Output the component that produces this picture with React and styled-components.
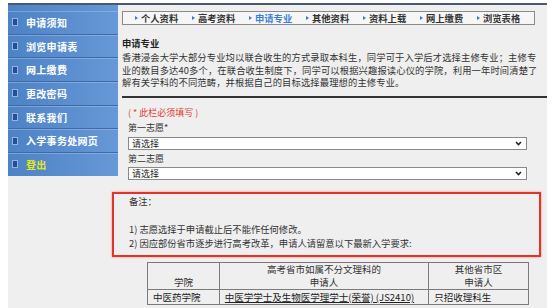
import React from "react";
import styled, { createGlobalStyle } from "styled-components";

const GlobalStyle = createGlobalStyle`
  html, body {
    margin: 0;
    padding: 0;
    background: #fff;
    overflow: hidden;
  }
  body {
    font-family: "Noto Sans CJK SC", "DejaVu Sans", sans-serif;
    color: #222;
  }
`;

const Page = styled.div`
  padding: 3px 12px 0 8px;
`;

const Frame = styled.div`
  display: flex;
  background: #efefef;
  border-top: 2px solid #4a5870;
  min-height: 400px;
`;

const Sidebar = styled.div`
  flex: 0 0 110px;
  align-self: flex-start;
  padding-top: 6px;
  background: linear-gradient(to right, #4d82c5, #6798d7);
`;

const MenuItem = styled.div`
  display: flex;
  align-items: center;
  height: 22.7px;
  padding-left: 4px;
  border-bottom: 1px solid #3f6aa6;
  box-shadow: inset 0 1px 0 rgba(160, 195, 240, 0.5);
  font-weight: 700;
  font-size: 10px;
  letter-spacing: 0.3px;
  color: ${({ $active }) => ($active ? "#e2e81a" : "#fff")};
  &:last-child {
    border-bottom: none;
  }
`;

const MenuIcon = styled.span`
  width: 4px;
  height: 6px;
  margin-right: 8px;
  background: #23508f;
  border: 1px solid #8fb5e6;
`;

const Main = styled.div`
  flex: 0 0 429px;
  padding-left: 4px;
  box-sizing: border-box;
`;

const NavBar = styled.div`
  display: flex;
  align-items: center;
  margin-top: 6px;
  width: 413px;
  height: 14px;
  box-sizing: border-box;
  padding-left: 12px;
  border: 1px solid #8a8a8a;
  background: #f6f6f6;
`;

const NavItem = styled.div`
  flex: 0 0 57px;
  display: flex;
  align-items: center;
  gap: 3px;
  font-size: 9.3px;
  font-weight: 700;
  white-space: nowrap;
  color: ${({ $active }) => ($active ? "#3b80d8" : "#333")};
`;

const NavBullet = styled.span`
  width: 0;
  height: 0;
  border-top: 2px solid transparent;
  border-bottom: 2px solid transparent;
  border-left: 3px solid #3b7ad0;
`;

const Heading = styled.div`
  margin-top: 12px;
  font-size: 9.3px;
  font-weight: 700;
  line-height: 12px;
  color: #222;
`;

const Intro = styled.p`
  margin: 2px 0 0;
  font-size: 9.3px;
  line-height: 12.5px;
  letter-spacing: 0.12px;
  color: #333;
  white-space: nowrap;
`;

const Rule = styled.div`
  margin-top: 7.5px;
  height: 2px;
  width: 425px;
  background: #333;
`;

const Form = styled.div`
  padding-left: 6px;
  margin-top: 7px;
`;

const Hint = styled.div`
  font-size: 9px;
  line-height: 15px;
  color: #e53935;
`;

const Label = styled.div`
  font-size: 9px;
  line-height: 15px;
  color: #333;
`;

const SelectBox = styled.div`
  display: flex;
  align-items: center;
  justify-content: space-between;
  width: 399px;
  height: 13px;
  margin: 1.5px 0 1px;
  box-sizing: border-box;
  padding: 0 4px 0 3px;
  border: 1px solid #8a8a8a;
  background: #fff;
  font-size: 9px;
  color: #222;
`;

const Notes = styled.div`
  margin: 12px 0 0 -10px;
  width: 429px;
  box-sizing: border-box;
  padding: 0 0 5px 15px;
  border: 2px solid #e2342a;
  box-shadow: 0 0 2px rgba(230, 60, 50, 0.6);
  font-size: 9.3px;
  line-height: 14px;
  color: #333;
`;

const Table = styled.table`
  margin: 5px 0 0 25px;
  width: 382px;
  border-collapse: collapse;
  font-size: 9.5px;
  color: #333;

  th, td {
    border: 1px solid #7a7a7a;
    padding: 0 5px;
  }
  th {
    font-weight: 400;
    line-height: 13px;
    height: 26px;
    text-align: center;
    vertical-align: bottom;
  }
  td {
    line-height: 14px;
    color: #222;
  }
`;

const CourseLink = styled.span`
  text-decoration: underline;
`;

const Chevron = () => (
  <svg width="7" height="5" viewBox="0 0 7 5">
    <path d="M1 1 L3.5 3.5 L6 1" fill="none" stroke="#222" strokeWidth="1.6" />
  </svg>
);

const menu = ["申请须知", "浏览申请表", "网上缴费", "更改密码", "联系我们", "入学事务处网页"];
const tabs = ["个人资料", "高考资料", "申请专业", "其他资料", "资料上载", "网上缴费", "浏览表格"];

export default function App() {
  return (
    <>
      <GlobalStyle />
      <Page>
        <Frame>
          <Sidebar>
            {menu.map((m) => (
              <MenuItem key={m}>
                <MenuIcon />
                {m}
              </MenuItem>
            ))}
            <MenuItem $active>
              <MenuIcon />
              登出
            </MenuItem>
          </Sidebar>
          <Main>
            <NavBar>
              {tabs.map((t) => (
                <NavItem key={t} $active={t === "申请专业"}>
                  <NavBullet />
                  {t}
                </NavItem>
              ))}
            </NavBar>
            <Heading>申请专业</Heading>
            <Intro>
              香港浸会大学大部分专业均以联合收生的方式录取本科生，同学可于入学后才选择主修专业；主修专
              <br />
              业的数目多达40多个，在联合收生制度下，同学可以根据兴趣报读心仪的学院，利用一年时间清楚了
              <br />
              解有关学科的不同范畴，并根据自己的目标选择最理想的主修专业。
            </Intro>
            <Rule />
            <Form>
              <Hint>( * 此栏必须填写 )</Hint>
              <Label>第一志愿*</Label>
              <SelectBox>
                请选择
                <Chevron />
              </SelectBox>
              <Label>第二志愿</Label>
              <SelectBox>
                请选择
                <Chevron />
              </SelectBox>
            </Form>
            <Notes>
              备注：
              <br />
              <br />
              1) 志愿选择于申请截止后不能作任何修改。
              <br />
              2) 因应部份省市逐步进行高考改革，申请人请留意以下最新入学要求:
            </Notes>
            <Table>
              <colgroup>
                <col style={{ width: "72px" }} />
                <col style={{ width: "210px" }} />
                <col style={{ width: "100px" }} />
              </colgroup>
              <thead>
                <tr>
                  <th>学院</th>
                  <th>
                    高考省市如属不分文理科的
                    <br />
                    申请人
                  </th>
                  <th>
                    其他省市区
                    <br />
                    申请人
                  </th>
                </tr>
              </thead>
              <tbody>
                <tr>
                  <td>中医药学院</td>
                  <td>
                    <CourseLink>中医学学士及生物医学理学士(荣誉) (JS2410)</CourseLink>
                  </td>
                  <td>只招收理科生</td>
                </tr>
              </tbody>
            </Table>
          </Main>
        </Frame>
      </Page>
    </>
  );
}
